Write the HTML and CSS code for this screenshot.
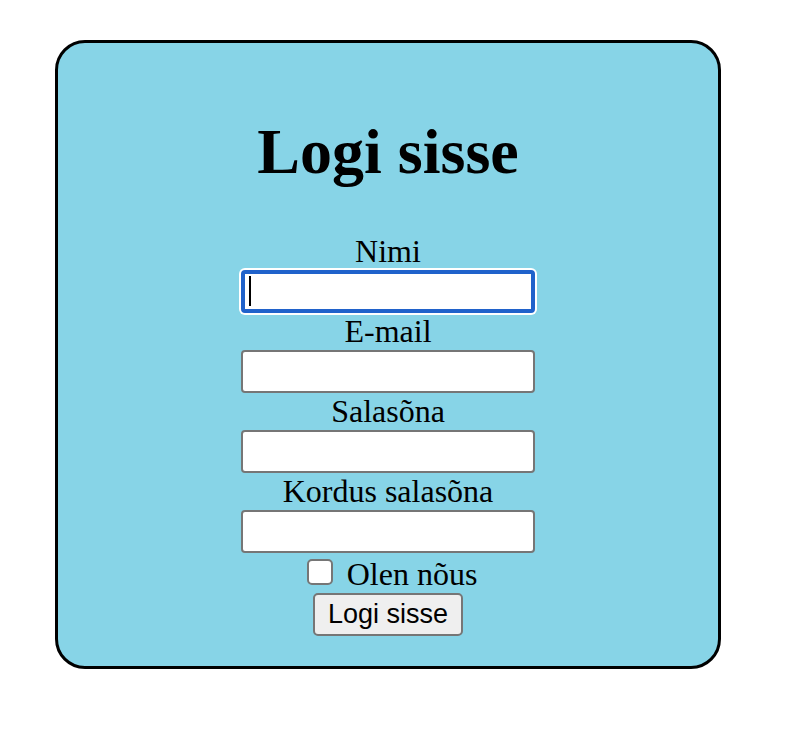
FILE: index.html
```html
<!DOCTYPE html>
<html lang="et">
<head>
<meta charset="utf-8">
<title>Logi sisse</title>
<link rel="stylesheet" href="styles.css">
</head>
<body>
<main class="card">
  <h1 class="title">Logi sisse</h1>
  <form class="form">
    <label class="label" for="name">Nimi</label>
    <div class="field field-active">
      <input class="input" id="name" type="text">
      <span class="caret"></span>
    </div>
    <label class="label" for="email">E-mail</label>
    <div class="field"><input class="input" id="email" type="email"></div>
    <label class="label" for="password">Salasõna</label>
    <div class="field"><input class="input" id="password" type="password"></div>
    <label class="label" for="repeat">Kordus salasõna</label>
    <div class="field"><input class="input" id="repeat" type="password"></div>
    <div class="consent">
      <input class="checkbox" id="agree" type="checkbox">
      <label for="agree">Olen nõus</label>
    </div>
    <button class="submit" type="button">Logi sisse</button>
  </form>
</main>
</body>
</html>
```

FILE: styles.css
```css
* {
  box-sizing: border-box;
}

body {
  margin: 0;
  padding: 40px 65px 40px 55px;
  background: #fff;
  color: #000;
  font-family: "Liberation Serif", "Times New Roman", serif;
  font-size: 32px;
  line-height: 37px;
}

.card {
  padding: 72px 30px 30px;
  border: 3px solid #000;
  border-radius: 30px;
  background: #87d4e7;
}

.title {
  margin: 0 0 44px;
  font-size: 64px;
  line-height: 74px;
  text-align: center;
}

.form {
  display: flex;
  flex-direction: column;
  align-items: center;
}

.field {
  position: relative;
  width: 294px;
  max-width: 100%;
}

.input {
  display: block;
  width: 100%;
  height: 43px;
  padding: 2px 6px;
  border: 2px solid #767676;
  border-radius: 4px;
  background: #fff;
  font: 27px "Liberation Sans", Arial, sans-serif;
  outline: none;
}

.field-active .input {
  border: 4px solid #2062cb;
  box-shadow: 0 0 0 2px #fff;
}

.caret {
  position: absolute;
  top: 6px;
  left: 8px;
  width: 2px;
  height: 30px;
  background: #000;
}

.consent {
  display: flex;
  align-items: center;
  gap: 14px;
  height: 40px;
  padding: 2px 0 0 8px;
}

.checkbox {
  appearance: none;
  width: 26px;
  height: 26px;
  margin: 0 0 4px;
  border: 2px solid #767676;
  border-radius: 5px;
  background: #fff;
}

.submit {
  width: 150px;
  height: 43px;
  padding: 0;
  border: 2px solid #767676;
  border-radius: 5px;
  background: #efefef;
  color: #000;
  font: 27px "Liberation Sans", Arial, sans-serif;
}
```
